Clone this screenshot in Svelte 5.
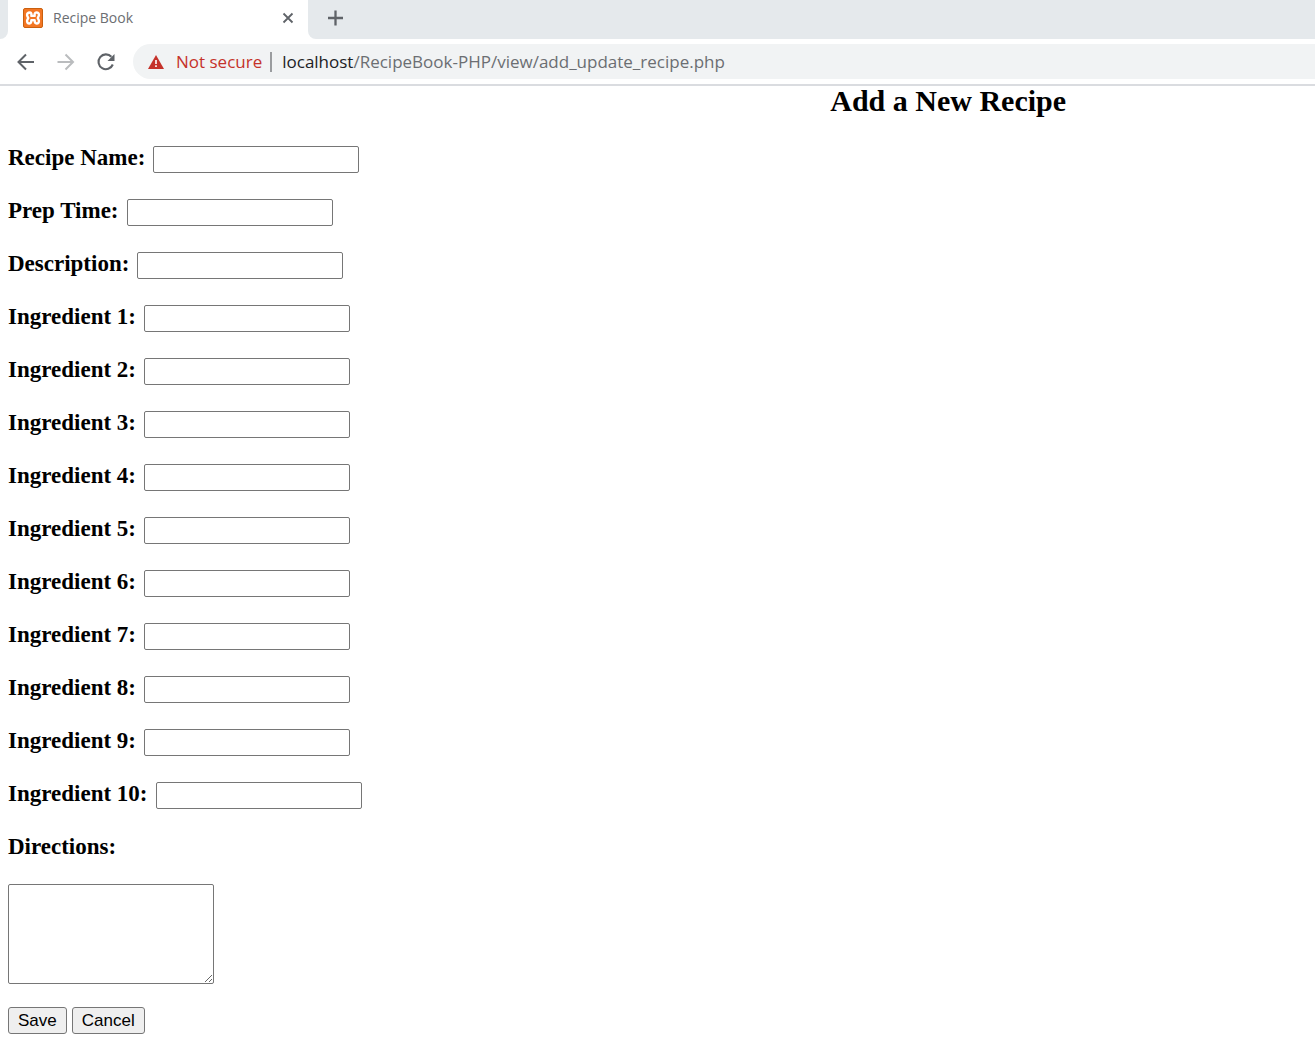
<script>
  const fields = [
    'Recipe Name',
    'Prep Time',
    'Description',
    ...Array.from({ length: 10 }, (_, i) => `Ingredient ${i + 1}`)
  ];
</script>

<header>
  <div class="tabs">
    <div class="edge"></div>
    <div class="tab">
      <svg class="favicon" width="20" height="20" viewBox="0 0 20 20" aria-hidden="true">
        <rect x="0.5" y="0.5" width="19" height="19" rx="1.5" fill="#f37623" stroke="#c9600f" />
        <path d="M7 4.5C4.7 4.5 3.9 5.8 4.1 7.3C4.3 8.7 5.2 9.3 5.2 10C5.2 10.7 4.3 11.3 4.1 12.7C3.9 14.2 4.7 15.5 6.4 15.5C8.4 15.5 8.4 14 8.4 12.1H11.6C11.6 14 11.6 15.5 13.6 15.5C15.3 15.5 16.1 14.2 15.9 12.7C15.7 11.3 14.8 10.7 14.8 10C14.8 9.3 15.7 8.7 15.9 7.3C16.1 5.8 15.3 4.5 13.4 4.5C11.5 4.5 11.6 6 11.6 7.9H8.4C8.4 6 8.5 4.5 7 4.5Z" fill="none" stroke="#fff" stroke-width="2.4" stroke-linejoin="round" />
      </svg>
      <span class="title">Recipe Book</span>
      <button class="icon" aria-label="Close tab">
        <svg width="12" height="12" viewBox="0 0 12 12"><path d="M1.5 1.5L10.5 10.5M10.5 1.5L1.5 10.5" stroke="#5f6368" stroke-width="1.8" /></svg>
      </button>
    </div>
    <div class="rest">
      <button class="icon" aria-label="New tab">
        <svg width="16" height="16" viewBox="0 0 16 16"><path d="M7.5 .5V15.5M0 8H15" stroke="#5f6368" stroke-width="2.3" /></svg>
      </button>
    </div>
  </div>
  <div class="toolbar">
    <nav>
      <button class="icon" aria-label="Back">
        <svg width="20" height="20" viewBox="0 0 20 20"><path d="M18 10H3M10 2.5L2.5 10L10 17.5" fill="none" stroke="#5f6368" stroke-width="2" /></svg>
      </button>
      <button class="icon" aria-label="Forward">
        <svg width="20" height="20" viewBox="0 0 20 20"><path d="M1.5 10H16.5M9.5 2.5L17 10L9.5 17.5" fill="none" stroke="#babcbe" stroke-width="2" /></svg>
      </button>
      <button class="icon" aria-label="Reload">
        <svg width="20" height="20" viewBox="0 0 20 20"><path d="M16.8 12.5A7.4 7.4 0 1 1 15.4 4.8" fill="none" stroke="#5f6368" stroke-width="2.1" /><path d="M18.5 2V9H11.5Z" fill="#5f6368" /></svg>
      </button>
    </nav>
    <div class="address">
      <svg width="16" height="14" viewBox="0 0 16 14" aria-hidden="true"><path d="M8 0L16 14H0Z" fill="#c5322a" /><path d="M8 5V9M8 10.3V12" stroke="#fff" stroke-width="1.6" /></svg>
      <span class="warning">Not secure</span>
      <span class="divider"></span>
      <span class="url"><b>localhost</b>/RecipeBook-PHP/view/add_update_recipe.php</span>
    </div>
  </div>
</header>

<main>
  <h1>Add a New Recipe</h1>
  <form onsubmit={(e) => e.preventDefault()}>
    {#each fields as field, i}
      <div class="row">
        <label for="field-{i}">{field}:</label>
        <input id="field-{i}" type="text" />
      </div>
    {/each}
    <div class="directions">
      <label for="directions">Directions:</label>
      <textarea id="directions"></textarea>
    </div>
    <div class="actions">
      <button type="submit">Save</button>
      <button type="button">Cancel</button>
    </div>
  </form>
</main>

<style>
  :global(body) {
    background: #fff;
  }
  header {
    font-family: 'Open Sans', 'Noto Sans', sans-serif;
    border-bottom: 2px solid #dadce0;
  }
  .tabs {
    display: flex;
    height: 39px;
    background: #fff;
  }
  .edge {
    width: 8px;
    background: #e5e9ec;
    border-bottom-right-radius: 8px;
  }
  .tab {
    display: flex;
    align-items: center;
    box-sizing: border-box;
    width: 300px;
    padding: 0 14px 3px 15px;
    background: linear-gradient(#e5e9ec 8px, #fff 8px);
    background: #fff;
    border-radius: 8px 8px 0 0;
  }
  .title {
    flex: 1;
    margin-left: 10px;
    padding-bottom: 2px;
    font-size: 14px;
    color: #6b6e72;
  }
  .rest {
    flex: 1;
    display: flex;
    align-items: center;
    padding: 0 20px 3px;
    background: #e5e9ec;
    border-bottom-left-radius: 8px;
  }
  .icon {
    display: flex;
    padding: 0;
    border: 0;
    background: none;
  }
  .toolbar {
    display: flex;
    align-items: center;
    height: 45px;
  }
  nav {
    display: flex;
    gap: 20px;
    padding: 0 17px 0 16px;
  }
  .address {
    flex: 1;
    display: flex;
    align-items: center;
    height: 35px;
    padding-left: 15px;
    background: #f1f3f4;
    border-radius: 18px 0 0 18px;
    font-size: 17px;
    white-space: nowrap;
  }
  .warning {
    margin-left: 12px;
    color: #c5322a;
  }
  .divider {
    width: 2px;
    height: 20px;
    margin: 0 10px 0 8px;
    background: #9a9c9f;
  }
  .url {
    color: #6b6e72;
  }
  .url b {
    font-weight: 400;
    color: #202124;
  }
  main {
    padding: 0 8px;
    font-family: 'Liberation Serif', serif;
    color: #000;
  }
  h1 {
    margin: 0 0 30px;
    padding-left: 63.3%;
    font-size: 30px;
    line-height: 30px;
    white-space: nowrap;
  }
  .row {
    display: flex;
    gap: 8px;
    height: 27px;
    margin-bottom: 26px;
  }
  label {
    font-size: 23px;
    font-weight: 700;
    line-height: 23px;
  }
  input,
  textarea {
    box-sizing: border-box;
    width: 206px;
    margin: 0;
    padding: 2px;
    background: #fff;
    border: 1px solid #767676;
    border-radius: 2px;
    font: 17px 'Liberation Sans', sans-serif;
  }
  .directions {
    display: flex;
    flex-direction: column;
    align-items: flex-start;
    gap: 26px;
  }
  textarea {
    height: 100px;
  }
  .actions {
    display: flex;
    gap: 5px;
    margin-top: 23px;
  }
  .actions button {
    height: 27px;
    padding: 0 9px;
    border: 1px solid #767676;
    border-radius: 3px;
    background: #efefef;
    color: #000;
    font: 17px 'Liberation Sans', sans-serif;
  }
</style>
